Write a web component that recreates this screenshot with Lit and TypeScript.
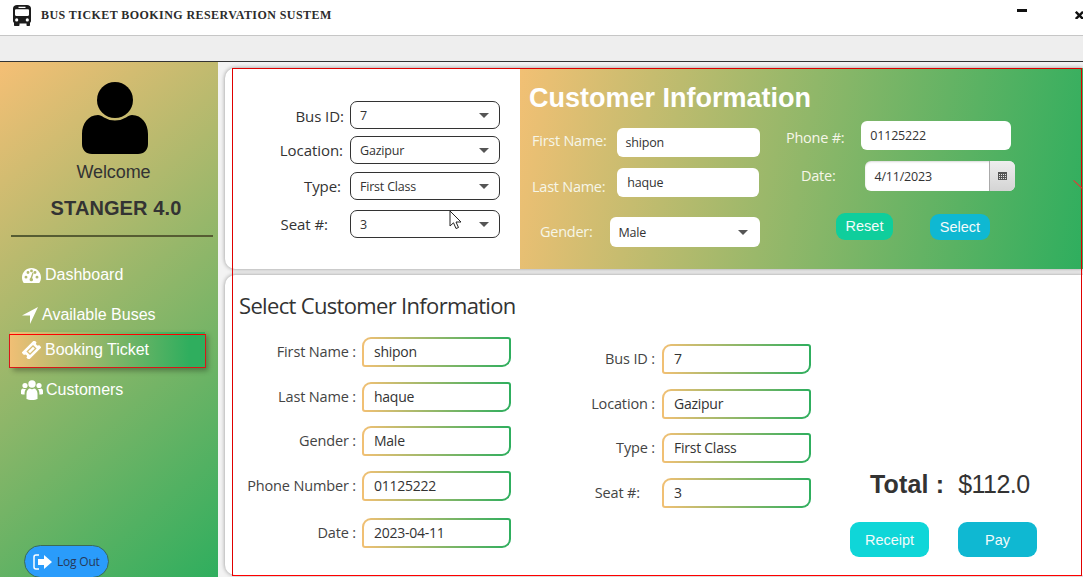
import { LitElement, html, css, svg } from 'lit';
import { customElement } from 'lit/decorators.js';

const busIcon = html`<svg class="bus" viewBox="0 0 18 21" width="18" height="21">
  <path fill="#1c1c1c" fill-rule="evenodd" d="M4 0h10c2.200 0 4 1.400 4 3.500V16c0 .9-.5 1.500-1 1.800V20c0 .6-.4 1-1 1h-1.500c-.6 0-1-.4-1-1v-1.500h-7V20c0 .6-.4 1-1 1H2c-.6 0-1-.4-1-1v-2.200C.5 17.500 0 16.900 0 16V3.500C0 1.400 1.800 0 4 0zM5.500 1.800v1.200h7V1.800zM3.200 4.300c-.7 0-1.200.5-1.200 1.200v4.300c0 .7.500 1.200 1.200 1.200h11.600c.7 0 1.200-.5 1.200-1.200V5.500c0-.7-.5-1.200-1.200-1.200zM3.700 13.300a1.600 1.600 0 1 0 0 3.200 1.600 1.600 0 0 0 0-3.200zM14.300 13.300a1.600 1.600 0 1 0 0 3.200 1.600 1.600 0 0 0 0-3.200z"/>
</svg>`;

const avatarIcon = html`<svg viewBox="0 0 66 72" width="66" height="72">
  <circle cx="33" cy="18" r="18" fill="#000"/>
  <path fill="#000" d="M16 33C6 33 0 42 0 52v10c0 6 4 10 10 10h46c6 0 10-4 10-10V52c0-10-6-19-16-19-2 0-4 1-6 2.500a21 21 0 0 1-22 0C20 34 18 33 16 33z"/>
</svg>`;

const dashIcon = svg`<path fill="#fff" fill-rule="evenodd" d="M9.500 1C4.300 1 0 5.200 0 10.500c0 2 .6 3.900 1.700 5.400h15.600c1.100-1.500 1.700-3.400 1.700-5.400C19 5.200 14.700 1 9.500 1zM4 11.600a1.400 1.400 0 1 1 0-2.900 1.400 1.400 0 0 1 0 2.900zM6 7a1.400 1.400 0 1 1 0-2.900A1.400 1.400 0 0 1 6 7zm3.500-1.700a1.400 1.400 0 1 1 0-2.800 1.400 1.400 0 0 1 0 2.800zM11 13.300a1.800 1.800 0 0 1-3.400-.9c0-.7.400-1.300 1-1.600l1.700-4.800c.1-.4.500-.5.800-.4.300.1.500.5.400.8l-1.400 4.600c.7.500 1.100 1.500.9 2.300zM13 7a1.400 1.400 0 1 1 0-2.900A1.400 1.400 0 0 1 13 7zm2 4.600a1.400 1.400 0 1 1 0-2.900 1.400 1.400 0 0 1 0 2.900z"/>`;

const arrowIcon = svg`<path fill="#fff" d="M16 0 0 8.500h8V17z"/>`;

const ticketIcon = svg`<g transform="rotate(-45 9.500 9) translate(9.500 9) scale(.85) translate(-9.500 -9)">
  <path fill="#fff" fill-rule="evenodd" d="M-1 3h21v4a2 2 0 0 0 0 4v4H-1v-4a2 2 0 0 0 0-4zM4 6v6h11V6z"/>
  <rect x="5.500" y="7.500" width="8" height="3" fill="#fff"/>
</g>`;

const usersIcon = svg`<g fill="#fff">
  <circle cx="11" cy="4" r="3.700"/><circle cx="4" cy="5.500" r="2.600"/><circle cx="18" cy="5.500" r="2.600"/>
  <path d="M5.500 19v-5.500C5.500 10.500 7.500 8.500 9 8.500c.5.500 1.200.8 2 .8s1.500-.3 2-.8c1.500 0 3.500 2 3.500 5V19c-1 .5-3 1-5.500 1s-4.500-.5-5.500-1z"/>
  <path d="M0 14v-3c0-1.500 1-2.600 2-2.600.5.400 1.200.7 2 .7.400 0 .7 0 1-.2-.9 1.200-1.400 2.800-1.400 4.600 0 .4 0 .7.100 1C2 14.500 1 14.400 0 14z"/>
  <path d="M22 14v-3c0-1.500-1-2.600-2-2.600-.5.400-1.200.7-2 .7-.4 0-.7 0-1-.2.900 1.200 1.400 2.800 1.400 4.600 0 .4 0 .7-.1 1 1.700 0 2.700-.1 3.700-.5z"/>
</g>`;

const menu = [
  { label: 'Dashboard', icon: dashIcon, box: '0 0 19 17', w: 19, h: 17, cls: 'dash' },
  { label: 'Available Buses', icon: arrowIcon, box: '0 0 16 17', w: 16, h: 17, cls: 'buses' },
  { label: 'Booking Ticket', icon: ticketIcon, box: '0 0 19 18', w: 19, h: 18, cls: 'booking' },
  { label: 'Customers', icon: usersIcon, box: '0 0 22 20', w: 22, h: 20, cls: 'customers' },
];

const pickRows = [
  { label: 'Bus ID:', value: '7', cls: 'p1' },
  { label: 'Location:', value: 'Gazipur', cls: 'p2' },
  { label: 'Type:', value: 'First Class', cls: 'p3' },
  { label: 'Seat #:', value: '3', cls: 'p4' },
];

const leftRows = [
  { label: 'First Name :', value: 'shipon', cls: 'l1' },
  { label: 'Last Name :', value: 'haque', cls: 'l2' },
  { label: 'Gender :', value: 'Male', cls: 'l3' },
  { label: 'Phone Number :', value: '01125222', cls: 'l4' },
  { label: 'Date :', value: '2023-04-11', cls: 'l5' },
];

const rightRows = [
  { label: 'Bus ID :', value: '7', cls: 'r1' },
  { label: 'Location :', value: 'Gazipur', cls: 'r2' },
  { label: 'Type :', value: 'First Class', cls: 'r3' },
  { label: 'Seat #:', value: '3', cls: 'r4' },
];

@customElement('app-root')
export class AppRoot extends LitElement {
  static styles = css`
    :host {
      display: block;
      width: 1083px;
      height: 577px;
      overflow: hidden;
      position: relative;
      font-family: 'Open Sans', 'Noto Sans', sans-serif;
      color: #333;
      background: #f3f3f3;
    }

    .titlebar {
      height: 35px;
      display: flex;
      align-items: center;
      background: #fff;
      border-bottom: 1px solid #c6c6c6;
      padding-left: 13px;
    }
    .bus { margin-top: -5px; }
    .app-name {
      margin: -5px 0 0 10px;
      font: bold 12px 'Liberation Serif', serif;
      letter-spacing: 0.43px;
      color: #2b2b2b;
    }
    .win-btns { margin-left: auto; display: flex; }
    .min { width: 10px; height: 3px; background: #111; margin: -7px 48px 0 0; }
    .close {
      width: 8px;
      margin-top: -5px;
      overflow: hidden;
    }

    .toolbar {
      height: 25px;
      background: #eee;
      border-bottom: 1px solid #333;
    }

    .main { display: flex; height: 515px; }

    .sidebar {
      width: 218px;
      flex: none;
      display: flex;
      flex-direction: column;
      background: linear-gradient(140deg, #f5bf75 0%, #2fae5e 100%);
      position: relative;
    }
    .avatar { margin: 20px 0 0 82px; height: 72px; }
    .welcome {
      margin-top: 6px;
      text-align: center;
      padding-left: 9px;
      font: 18px 'Liberation Sans', sans-serif;
      line-height: 24px;
      letter-spacing: -0.1px;
      color: #333;
    }
    .brand {
      margin-top: 12px;
      text-align: center;
      padding-left: 14px;
      font: bold 20px 'Liberation Sans', sans-serif;
      letter-spacing: 0.1px;
      line-height: 24px;
      color: #333;
    }
    .rule { height: 2px; margin: 15px 5px 0 11px; background: #565c33; }
    nav { display: block; margin-top: 26px; }
    .item {
      display: flex;
      align-items: center;
      color: #fff;
      font: 16px 'Liberation Sans', sans-serif;
    }
    .item.dash { height: 24px; padding-left: 22px; gap: 4px; }
    .item.buses { height: 24px; margin-top: 16px; padding-left: 22px; gap: 4px; }
    .item.booking {
      height: 36px;
      margin: 5px 13px 0 10px;
      padding-left: 12px;
      gap: 4px;
      background: linear-gradient(90deg, #f0bf75 0%, #2fae5e 92%);
      box-shadow: 3px 3px 5px rgba(0, 0, 0, 0.3);
    }
    .item.customers { height: 24px; margin-top: 10px; padding-left: 21px; gap: 3px; }

    .logout {
      margin: auto 0 -1px 24px;
      width: 85px;
      height: 33px;
      box-sizing: border-box;
      display: flex;
      align-items: center;
      gap: 4px;
      padding-left: 8px;
      border-radius: 17px;
      background: #2a9cfb;
      border: 1px solid #3c6b55;
      font: 12px 'Open Sans', sans-serif;
      letter-spacing: -0.2px;
      color: #26395a;
    }

    .content {
      flex: 1;
      padding: 6px 0 0 7px;
      display: flex;
      flex-direction: column;
      gap: 6px;
      min-width: 0;
    }
    .card {
      background: #fff;
      border-radius: 10px 0 0 10px;
      box-shadow: 0 0 4px rgba(0, 0, 0, 0.4);
    }

    .top { height: 201px; display: flex; overflow: hidden; }
    .pick {
      width: 295px;
      flex: none;
      box-sizing: border-box;
      padding-top: 33px;
      display: flex;
      flex-direction: column;
    }
    .pick-row { display: flex; align-items: center; height: 28px; font-size: 15px; letter-spacing: -0.05px; }
    .pick-row label { text-align: right; flex: none; }
    .pick-row.p1 label { width: 119px; margin: 2px 6px 0 0; }
    .pick-row.p2 label { width: 118px; margin-right: 7px; }
    .pick-row.p3 label { width: 116px; margin-right: 9px; }
    .pick-row.p4 label { width: 103px; margin-right: 22px; }
    .pick-row.p2 { margin-top: 7px; }
    .pick-row.p3 { margin-top: 8px; }
    .pick-row.p4 { margin-top: 10px; }

    .select {
      width: 150px;
      height: 28px;
      box-sizing: border-box;
      display: flex;
      align-items: center;
      justify-content: space-between;
      padding: 0 10px 0 9px;
      border: 1px solid #333;
      border-radius: 7px;
      background: #fff;
      font-size: 12.500px;
      letter-spacing: -0.2px;
      color: #333;
    }
    .caret {
      width: 0;
      height: 0;
      border-left: 5px solid transparent;
      border-right: 5px solid transparent;
      border-top: 5px solid #555;
    }

    .info {
      flex: 1;
      display: flex;
      flex-direction: column;
      background: linear-gradient(100deg, #f2c074 0%, #2eae5e 100%);
      color: #fff;
      min-width: 0;
    }
    h1 {
      margin: 14px 0 0 9px;
      font: bold 27px/32px 'Liberation Sans', sans-serif;
      color: #fff;
      height: 32px;
    }
    .cols { display: flex; margin-top: -1px; }
    .col-a { width: 266px; flex: none; }
    .f { display: flex; align-items: center; font-size: 14.500px; letter-spacing: -0.25px; color: #f6f6e8; }
    .f span { flex: none; }
    .wbox {
      height: 29px;
      box-sizing: border-box;
      background: #fff;
      border-radius: 6px;
      display: flex;
      align-items: center;
      font-size: 12.500px;
      letter-spacing: -0.2px;
      color: #333;
    }
    .first { margin: 15px 0 0 12px; gap: 10px; }
    .first span { margin-bottom: 4px; }
    .last { margin: 11px 0 0 12px; gap: 12px; }
    .last span { margin-top: 7px; }
    .gender { margin: 20px 0 0 20px; gap: 17px; }
    .gender span { margin-bottom: 2px; }
    .first .wbox { width: 143px; padding-left: 9px; }
    .last .wbox { width: 142px; padding-left: 10px; }
    .gender .wbox {
      width: 150px;
      height: 30px;
      padding: 0 12px 0 9px;
      justify-content: space-between;
    }
    .phone { margin: 8px 0 0 0; gap: 17px; }
    .phone span { margin-top: 3px; }
    .phone .wbox { width: 150px; padding-left: 9px; }
    .date { margin: 11px 0 0 15px; gap: 30px; }
    .date span { margin-bottom: 1px; }
    .date .wbox {
      width: 150px;
      height: 30px;
      padding: 0 0 0 9px;
      justify-content: space-between;
      overflow: hidden;
      box-shadow: inset 0 1px 2px rgba(0, 0, 0, 0.15);
    }
    .cal {
      width: 26px;
      height: 30px;
      display: flex;
      align-items: center;
      justify-content: center;
      background: linear-gradient(#eee, #d4d4d4);
      border-left: 1px solid #aaa;
      box-sizing: border-box;
    }
    .actions { display: flex; margin: 22px 0 0 50px; align-items: flex-end; }
    .btn {
      display: flex;
      align-items: center;
      justify-content: center;
      color: #f4fbfb;
      font: 14.500px 'Liberation Sans', sans-serif;
    }
    .reset { width: 57px; height: 27px; background: #0fce9c; border-radius: 9px; padding-bottom: 2px; box-sizing: border-box; }
    .sel { width: 60px; height: 26px; background: #0fb8d2; border-radius: 9px; margin-left: 37px; }

    .bottom {
      height: 300px;
      display: flex;
      flex-direction: column;
      box-sizing: border-box;
      padding: 15px 0 0 14px;
    }
    h2 {
      margin: 0 0 1px;
      font: 22px/30px 'Open Sans', sans-serif;
      letter-spacing: -0.67px;
      color: #333;
    }
    .form { display: flex; }
    .form-a { width: 286px; flex: none; display: flex; flex-direction: column; margin-top: 16px; }
    .form-b { width: 286px; flex: none; display: flex; flex-direction: column; margin-top: 23px; margin-left: 14px; }
    .row { display: flex; align-items: center; height: 30px; font-size: 14.500px; letter-spacing: -0.15px; color: #444; }
    .row label { flex: none; text-align: right; padding-bottom: 2px; }
    .form-a .row label { width: 117px; margin-right: 6px; }
    .form-b .row label { width: 116px; margin-right: 7px; }
    .row.l2, .row.r2 { margin-top: 15px; }
    .row.l3, .row.l4, .row.r3, .row.r4 { margin-top: 14px; }
    .row.l4 { margin-top: 15px; }
    .row.r4 { margin-top: 15px; }
    .row.l5 { margin-top: 17px; }
    .form-b .row.r4 label { width: 101px; margin-right: 22px; }
    .gbox {
      width: 149px;
      height: 30px;
      box-sizing: border-box;
      padding: 0 0 2px 10px;
      display: flex;
      align-items: center;
      border: 2px solid transparent;
      border-radius: 9px 3px 9px 3px;
      background: linear-gradient(#fff, #fff) padding-box,
        linear-gradient(90deg, #f2c074, #2eae5e) border-box;
      font-size: 14px;
      letter-spacing: -0.25px;
      color: #333;
    }
    .summary {
      margin: 148px 0 0 45px;
      display: flex;
      flex-direction: column;
    }
    .total { display: flex; align-items: center; height: 30px; color: #333; }
    .total b { font: bold 25px 'Liberation Sans', sans-serif; letter-spacing: 0.15px; white-space: nowrap; }
    .total span { font: 25px 'Liberation Sans', sans-serif; letter-spacing: -0.55px; margin-left: 14px; }
    .pay-row { display: flex; margin: 23px 0 0 -20px; gap: 29px; }
    .pay-row .btn { width: 79px; height: 35px; border-radius: 9px; flex: none; }
    .receipt { background: #0fd6d8; }
    .pay { background: #0fb8d2; }

    .outline {
      position: absolute;
      left: 232px;
      top: 68px;
      width: 850px;
      height: 508px;
      box-sizing: border-box;
      border: 1px solid #e00000;
      border-bottom-color: #f00;
      pointer-events: none;
    }
    .tick {
      position: absolute;
      left: 1072px;
      top: 184px;
      width: 12px;
      height: 1px;
      background: #e33;
      transform: rotate(42deg);
    }
    .nav-outline {
      position: absolute;
      left: 9px;
      top: 334px;
      width: 197px;
      height: 34px;
      box-sizing: border-box;
      border: 1px solid #d81818;
      border-top-color: #f00;
    }
    .cursor { position: absolute; left: 449px; top: 210px; }
  `;

  renderItem(m: (typeof menu)[number]) {
    return html`<div class="item ${m.cls}">
      <svg viewBox=${m.box} width=${m.w} height=${m.h}>${m.icon}</svg>
      <span>${m.label}</span>
    </div>`;
  }

  renderRow(r: { label: string; value: string; cls: string }) {
    return html`<div class="row ${r.cls}"><label>${r.label}</label><div class="gbox">${r.value}</div></div>`;
  }

  render() {
    return html`
      <div class="titlebar">
        ${busIcon}
        <div class="app-name">BUS TICKET BOOKING RESERVATION SUSTEM</div>
        <div class="win-btns">
          <div class="min"></div>
          <svg class="close" viewBox="0 0 8 8" width="8" height="8">
            <path stroke="#111" stroke-width="2.400" d="M.8.8 8 8M8 .8.800 8"/>
          </svg>
        </div>
      </div>
      <div class="toolbar"></div>
      <div class="main">
        <aside class="sidebar">
          <div class="avatar">${avatarIcon}</div>
          <div class="welcome">Welcome</div>
          <div class="brand">STANGER 4.0</div>
          <div class="rule"></div>
          <nav>${menu.map((m) => this.renderItem(m))}</nav>
          <div class="logout">
            <svg viewBox="0 0 20 16" width="20" height="16">
              <path fill="none" stroke="#fff" stroke-width="1.500" d="M6 1H3C2 1 1 2 1 3v10c0 1 1 2 2 2h3"/>
              <path fill="#fff" d="M5 5h6V1l8 7-8 7v-4H5z"/>
            </svg>
            <span>Log Out</span>
          </div>
        </aside>
        <div class="content">
          <section class="card top">
            <div class="pick">
              ${pickRows.map(
                (r) => html`<div class="pick-row ${r.cls}">
                  <label>${r.label}</label>
                  <div class="select">${r.value}<i class="caret"></i></div>
                </div>`
              )}
            </div>
            <div class="info">
              <h1>Customer Information</h1>
              <div class="cols">
                <div class="col-a">
                  <div class="f first"><span>First Name:</span><div class="wbox">shipon</div></div>
                  <div class="f last"><span>Last Name:</span><div class="wbox">haque</div></div>
                  <div class="f gender"><span>Gender:</span><div class="wbox">Male<i class="caret"></i></div></div>
                </div>
                <div>
                  <div class="f phone"><span>Phone #:</span><div class="wbox">01125222</div></div>
                  <div class="f date">
                    <span>Date:</span>
                    <div class="wbox">4/11/2023
                      <div class="cal">
                        <svg viewBox="0 0 9 8" width="9" height="8"><path fill="#555" fill-rule="evenodd" d="M0 0h9v8H0zM1 2v1h1V2zM3 2v1h1V2zM5 2v1h1V2zM7 2v1h1V2zM1 4v1h1V4zM3 4v1h1V4zM5 4v1h1V4zM7 4v1h1V4zM1 6v1h1V6zM3 6v1h1V6zM5 6v1h1V6zM7 6v1h1V6z"/></svg>
                      </div>
                    </div>
                  </div>
                  <div class="actions">
                    <div class="btn reset">Reset</div>
                    <div class="btn sel">Select</div>
                  </div>
                </div>
              </div>
            </div>
          </section>
          <section class="card bottom">
            <h2>Select Customer Information</h2>
            <div class="form">
              <div class="form-a">${leftRows.map((r) => this.renderRow(r))}</div>
              <div class="form-b">${rightRows.map((r) => this.renderRow(r))}</div>
              <div class="summary">
                <div class="total"><b>Total :</b><span>$112.0</span></div>
                <div class="pay-row">
                  <div class="btn receipt">Receipt</div>
                  <div class="btn pay">Pay</div>
                </div>
              </div>
            </div>
          </section>
        </div>
      </div>
      <div class="outline"></div>
      <div class="tick"></div>
      <div class="nav-outline"></div>
      <svg class="cursor" viewBox="0 0 13 20" width="13" height="20">
        <path fill="#fff" stroke="#222" stroke-width="1" d="M1 1v15l3.500-3.200 2.500 5.700 2.500-1-2.500-5.500H12z"/>
      </svg>
    `;
  }
}
